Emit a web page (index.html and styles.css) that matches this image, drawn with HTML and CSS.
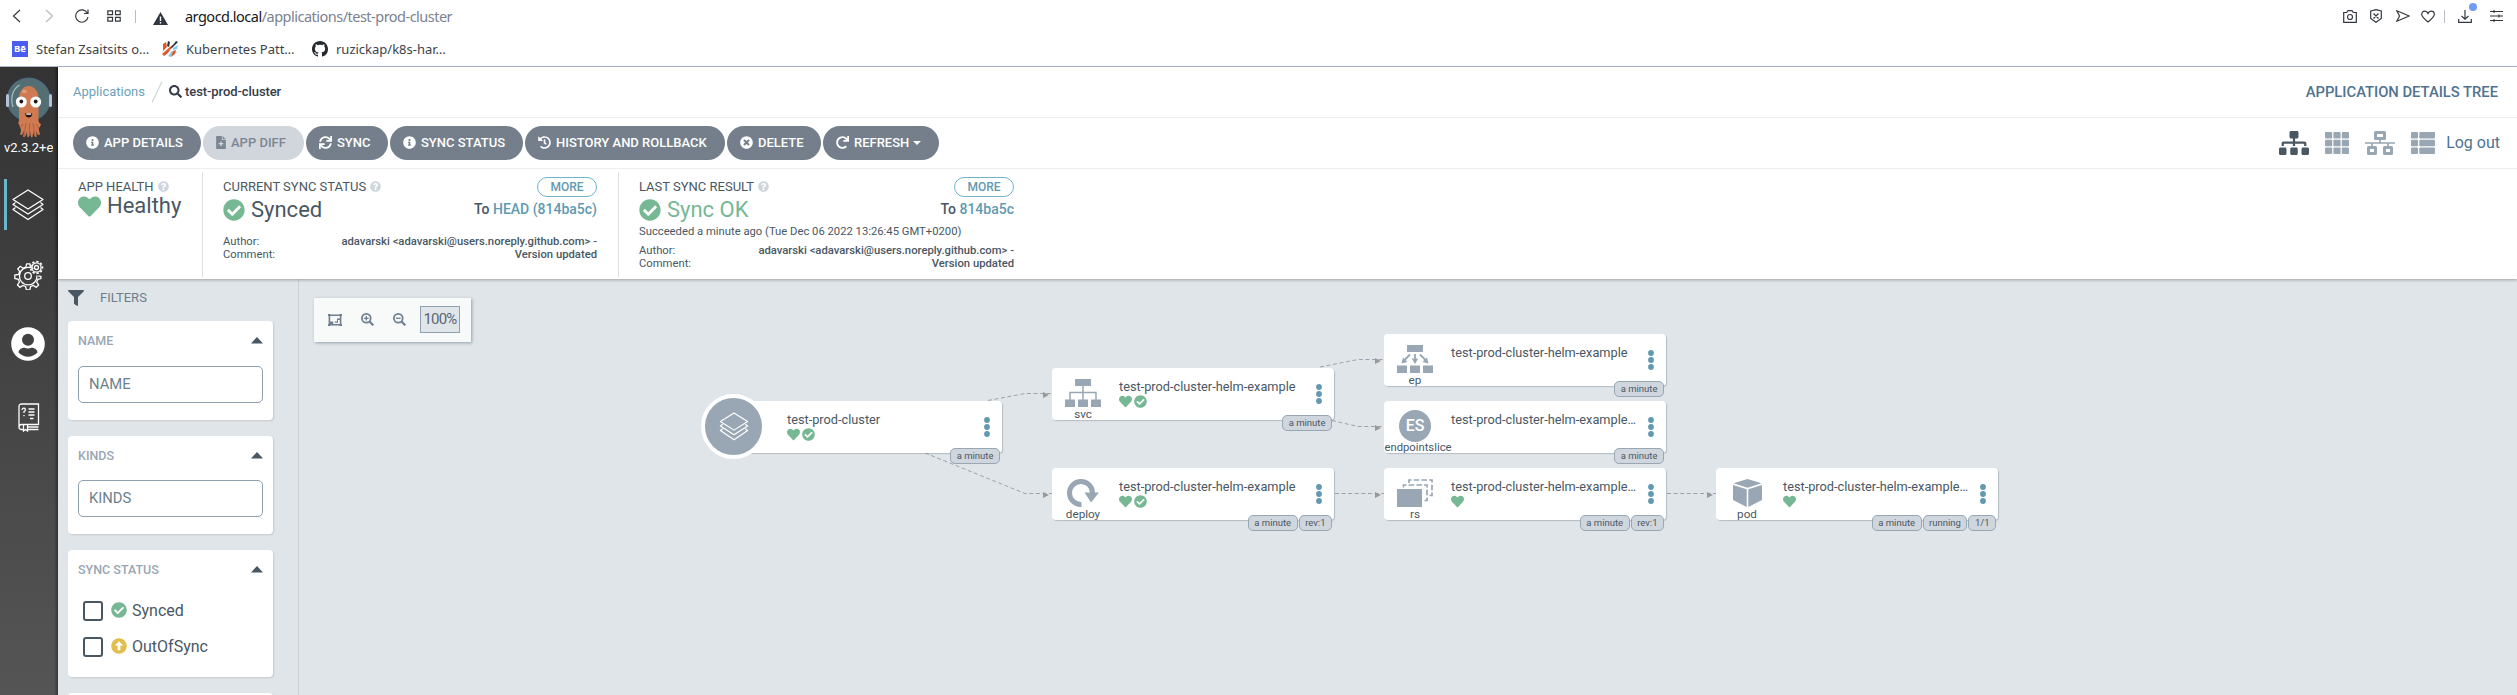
FILE: index.html
```html
<!DOCTYPE html>
<html lang="en">
<head>
<meta charset="utf-8">
<title>test-prod-cluster</title>
<link rel="stylesheet" href="styles.css">
</head>
<body>
<svg class="defs" width="0" height="0">
<defs>
<symbol id="info" viewBox="0 0 512 512"><path d="M256 8C119.043 8 8 119.083 8 256c0 136.997 111.043 248 248 248s248-111.003 248-248C504 119.083 392.957 8 256 8zm0 110c23.196 0 42 18.804 42 42s-18.804 42-42 42-42-18.804-42-42 18.804-42 42-42zm56 254c0 6.627-5.373 12-12 12h-88c-6.627 0-12-5.373-12-12v-24c0-6.627 5.373-12 12-12h12v-64h-12c-6.627 0-12-5.373-12-12v-24c0-6.627 5.373-12 12-12h64c6.627 0 12 5.373 12 12v100h12c6.627 0 12 5.373 12 12v24z"/></symbol>
<symbol id="heart" viewBox="0 0 512 512"><path d="M462.3 62.6C407.5 15.9 326 24.3 275.7 76.2L256 96.5l-19.7-20.3C186.1 24.3 104.5 15.9 49.7 62.6c-62.8 53.6-66.1 149.8-9.9 207.9l193.5 199.8c12.5 12.9 32.8 12.9 45.3 0l193.5-199.8c56.3-58.1 53-154.3-9.8-207.9z"/></symbol>
<symbol id="check" viewBox="0 0 512 512"><path d="M504 256c0 136.967-111.033 248-248 248S8 392.967 8 256 119.033 8 256 8s248 111.033 248 248zM227.314 387.314l184-184c6.248-6.248 6.248-16.379 0-22.627l-22.627-22.627c-6.248-6.249-16.379-6.249-22.628 0L216 308.118l-70.059-70.059c-6.248-6.248-16.379-6.248-22.628 0l-22.627 22.627c-6.248 6.248-6.248 16.379 0 22.627l104 104c6.249 6.249 16.379 6.249 22.628.001z"/></symbol>
<symbol id="sync" viewBox="0 0 512 512"><path d="M440.65 12.57l4 82.77A247.16 247.16 0 0 0 255.83 8C134.73 8 33.91 94.92 12.29 209.82A12 12 0 0 0 24.09 224h49.05a12 12 0 0 0 11.67-9.26 175.91 175.91 0 0 1 317-56.94l-101.46-4.86a12 12 0 0 0-12.57 12v47.41a12 12 0 0 0 12 12H500a12 12 0 0 0 12-12V12a12 12 0 0 0-12-12h-47.37a12 12 0 0 0-11.98 12.57zM255.83 432a175.61 175.61 0 0 1-146-77.8l101.8 4.87a12 12 0 0 0 12.57-12v-47.4a12 12 0 0 0-12-12H12a12 12 0 0 0-12 12V500a12 12 0 0 0 12 12h47.35a12 12 0 0 0 12-12.6l-4.15-82.57A247.17 247.17 0 0 0 255.83 504c121.11 0 221.93-86.92 243.55-201.82a12 12 0 0 0-11.8-14.18h-49.05a12 12 0 0 0-11.67 9.26A175.86 175.86 0 0 1 255.83 432z"/></symbol>
<symbol id="redo" viewBox="0 0 512 512"><path d="M500.33 0h-47.41a12 12 0 0 0-12 12.57l4 82.76A247.42 247.42 0 0 0 256 8C119.34 8 7.9 119.53 8 256.19 8.1 393.07 119.1 504 256 504a247.1 247.1 0 0 0 166.18-63.91 12 12 0 0 0 .48-17.43l-34-34a12 12 0 0 0-16.38-.55A176 176 0 1 1 402.1 157.8l-101.53-4.87a12 12 0 0 0-12.57 12v47.41a12 12 0 0 0 12 12h200.33a12 12 0 0 0 12-12V12a12 12 0 0 0-12-12z"/></symbol>
<symbol id="times" viewBox="0 0 512 512"><path d="M256 8C119 8 8 119 8 256s111 248 248 248 248-111 248-248S393 8 256 8zm121.6 313.1c4.7 4.7 4.7 12.3 0 17L338 377.6c-4.7 4.7-12.3 4.7-17 0L256 312l-65.1 65.6c-4.7 4.7-12.3 4.7-17 0L134.4 338c-4.7-4.7-4.7-12.3 0-17l65.6-65-65.6-65.1c-4.7-4.7-4.7-12.3 0-17l39.6-39.6c4.7-4.7 12.3-4.7 17 0l65 65.7 65.1-65.6c4.7-4.7 12.3-4.7 17 0l39.6 39.6c4.7 4.7 4.7 12.3 0 17L312 256l65.6 65.1z"/></symbol>
<symbol id="history" viewBox="0 0 512 512"><path d="M504 255.531c.253 136.64-111.18 248.372-247.82 248.468-59.015.042-113.223-20.53-155.822-54.911-11.077-8.94-11.905-25.541-1.839-35.607l11.267-11.267c8.609-8.609 22.353-9.551 31.891-1.984C173.062 425.135 212.781 440 256 440c101.705 0 184-82.311 184-184 0-101.705-82.311-184-184-184-48.814 0-93.149 18.969-126.068 49.932l50.754 50.754c10.08 10.08 2.941 27.314-11.313 27.314H24c-8.837 0-16-7.163-16-16V38.627c0-14.254 17.234-21.393 27.314-11.314l49.372 49.372C129.209 34.136 189.552 8 256 8c136.81 0 247.747 110.78 248 247.531zm-180.912 78.784l9.823-12.63c8.138-10.463 6.253-25.542-4.21-33.679L288 256.349V152c0-13.255-10.745-24-24-24h-16c-13.255 0-24 10.745-24 24v135.651l65.409 50.874c10.463 8.137 25.541 6.253 33.679-4.21z"/></symbol>
<symbol id="filediff" viewBox="0 0 384 512"><path fill-rule="evenodd" d="M24 0h200v136c0 13 11 24 24 24h136v328c0 13-11 24-24 24H24c-13 0-24-11-24-24V24C0 11 11 0 24 0zM256 0l128 128H256zM164 216v64h-64v48h64v64h56v-64h64v-48h-64v-64z"/></symbol>
<symbol id="search" viewBox="0 0 512 512"><path d="M505 442.7L405.3 343c-4.5-4.5-10.6-7-17-7H372c27.6-35.3 44-79.7 44-128C416 93.1 322.9 0 208 0S0 93.1 0 208s93.1 208 208 208c48.3 0 92.7-16.4 128-44v16.3c0 6.4 2.5 12.5 7 17l99.7 99.7c9.4 9.4 24.6 9.4 33.9 0l28.3-28.3c9.4-9.4 9.4-24.6.1-34zM208 336c-70.7 0-128-57.2-128-128 0-70.7 57.2-128 128-128 70.7 0 128 57.2 128 128 0 70.7-57.2 128-128 128z"/></symbol>
<symbol id="filter" viewBox="0 0 512 512"><path d="M487.976 0H24.028C2.71 0-8.047 25.866 7.058 40.971L192 225.941V432c0 7.831 3.821 15.17 10.237 19.662l80 55.98C298.02 518.69 320 507.493 320 487.98V225.941l184.947-184.97C520.021 25.896 509.338 0 487.976 0z"/></symbol>
<symbol id="question" viewBox="0 0 512 512"><path d="M504 256c0 136.997-111.043 248-248 248S8 392.997 8 256C8 119.083 119.043 8 256 8s248 111.083 248 248zM262.655 90c-54.497 0-89.255 22.957-116.549 63.758-3.536 5.286-2.353 12.415 2.715 16.258l34.699 26.31c5.205 3.947 12.621 3.008 16.665-2.122 17.864-22.658 30.113-35.797 57.303-35.797 20.429 0 45.698 13.148 45.698 32.958 0 14.976-12.363 22.667-32.534 33.976C247.128 238.528 216 254.941 216 296v4c0 6.627 5.373 12 12 12h56c6.627 0 12-5.373 12-12v-1.333c0-28.462 83.186-29.647 83.186-106.667 0-58.002-60.165-102-116.531-102zM256 338c-25.365 0-46 20.635-46 46 0 25.364 20.635 46 46 46s46-20.636 46-46c0-25.365-20.635-46-46-46z"/></symbol>
<symbol id="up" viewBox="0 0 16 16"><circle cx="8" cy="8" r="7.8"/><path fill="#fff" d="M8 3.200l4.200 4.400H9.400v4.600H6.600V7.600H3.800z"/></symbol>
<symbol id="layers" viewBox="0 0 32 32"><g fill="none" stroke="currentColor" stroke-width="1.300" stroke-linejoin="round"><path d="M16 1l15 9.500-15 9.500L1 10.500z"/><path d="M3.500 13.500L1 15.500 16 25l15-9.500-2.500-2"/><path d="M3.500 18.500L1 20.500 16 30.500l15-10-2.500-2"/></g></symbol>
<symbol id="dots" viewBox="0 0 6 20"><circle cx="3" cy="3" r="2.900"/><circle cx="3" cy="10" r="2.900"/><circle cx="3" cy="17" r="2.900"/></symbol>
<symbol id="caret" viewBox="0 0 12 7"><path d="M0 6.600L6 0l6 6.600z"/></symbol>
</defs>
</svg>

<header class="browser">
  <div class="navbar">
    <div class="nav-left">
      <svg class="bi" width="9" height="14" viewBox="0 0 9 14"><path d="M8 1L1.500 7 8 13"/></svg>
      <svg class="bi dim fwd" width="9" height="14" viewBox="0 0 9 14"><path d="M1 1l6.500 6L1 13"/></svg>
      <svg class="bi reload" width="14" height="14" viewBox="0 0 14 14"><path d="M12.400 4.200A6.200 6.200 0 1 0 13 8M13 .5v4H9"/></svg>
      <svg class="bi tiles" width="14" height="12" viewBox="0 0 14 12"><path d="M.8.8h4.700v3.900H.8zM8.500.8h4.700v3.900H8.500zM.8 7.300h4.700v3.900H.8zM8.500 7.300h4.700v3.900H8.500z"/></svg>
      <span class="sep"></span>
      <svg class="warn" width="15" height="13" viewBox="0 0 15 13"><path fill="#2f3640" d="M7.500 0L15 13H0z"/><path fill="#fff" d="M6.800 4.500h1.400V9H6.800zM6.800 10h1.400v1.400H6.800z"/></svg>
      <span class="url"><b>argocd.local</b>/applications/test-prod-cluster</span>
    </div>
    <div class="nav-right">
      <svg class="bi" width="14" height="13" viewBox="0 0 14 13"><path d="M.7 2.500h3L5 .7h4l1.300 1.800h3v9.800H.7z"/><circle cx="7" cy="7" r="2.500"/></svg>
      <svg class="bi shield" width="12" height="14" viewBox="0 0 12 14"><path d="M.7 2L6 .7 11.300 2v7.500L6 13.300.7 9.500zM3.500 4.500l5 5M8.500 4.500l-5 5"/></svg>
      <svg class="bi send" width="14" height="12" viewBox="0 0 14 12"><path d="M.8.8L13.200 6 .8 11.200 3.500 6z"/></svg>
      <svg class="bi fav" width="14" height="13" viewBox="0 0 14 12"><path d="M7 11.400C2.500 8 .7 6 .7 3.800 .7 2 2 .7 3.800.7 5.200.7 6.400 1.600 7 3 7.600 1.600 8.800.7 10.200.7 12 .7 13.300 2 13.300 3.800c0 2.200-1.800 4.200-6.300 7.600z"/></svg>
      <span class="sep"></span>
      <span class="dl"><svg class="bi" width="14" height="13" viewBox="0 0 14 13"><path d="M7 0v9M3.500 6L7 9.300 10.500 6M.7 9v3.300h12.600V9"/></svg><i class="dot"></i></span>
      <svg class="bi" width="13" height="12" viewBox="0 0 13 12"><path d="M0 1.500h13M0 6h13M0 10.500h13M4 0v3M9 4.500v3M4 9v3"/></svg>
    </div>
  </div>
  <div class="bookmarks">
    <span class="be">Bē</span><span class="bm bm1">Stefan Zsaitsits o…</span>
    <svg width="16" height="16" viewBox="0 0 16 16"><path fill="#e0592a" d="M1 3l3-2 1 5-4 4zM0 13l9-8 3-2-6 9-4 3z"/><path fill="#23304a" d="M6 0l2 1-1 5-2-1zM14 0l2 1-6 6-2 1z"/><path fill="#7fcdf5" d="M11 7l5-3-1 4-4 1zM6 15l4-5 5 1-4 2-2 3z"/><path fill="#e0592a" d="M11 10l3-1-1 4-4 3z"/></svg>
    <span class="bm bm2">Kubernetes Patt…</span>
    <svg width="16" height="16" viewBox="0 0 16 16"><path fill="#24292f" d="M8 0C3.580 0 0 3.580 0 8c0 3.540 2.290 6.530 5.470 7.590.4.070.55-.17.55-.38 0-.19-.01-.82-.01-1.490-2.010.37-2.530-.49-2.690-.94-.09-.23-.48-.94-.82-1.130-.28-.15-.68-.52-.01-.53.63-.01 1.080.58 1.230.82.72 1.210 1.870.87 2.330.66.070-.52.28-.87.51-1.070-1.780-.2-3.640-.89-3.640-3.950 0-.87.31-1.590.82-2.150-.08-.2-.36-1.020.08-2.120 0 0 .67-.21 2.200.82.64-.18 1.320-.27 2-.27s1.360.09 2 .27c1.530-1.040 2.200-.82 2.200-.82.44 1.100.16 1.920.08 2.120.51.56.82 1.270.82 2.150 0 3.070-1.870 3.750-3.650 3.950.29.25.54.73.54 1.480 0 1.070-.01 1.930-.01 2.200 0 .21.15.46.55.38A8.010 8.010 0 0016 8c0-4.420-3.580-8-8-8z"/></svg>
    <span class="bm bm3">ruzickap/k8s-har…</span>
  </div>
</header>

<div class="app">
  <nav class="sidebar">
    <svg class="logo" width="48" height="62" viewBox="0 0 48 62">
      <circle cx="22.700" cy="22.500" r="21.500" fill="#546f74" stroke="#4c6a8c" stroke-width="1"/>
      <path d="M7 30C4 20 7 12 13.500 8" fill="none" stroke="#9fb9bb" stroke-width="1.300"/>
      <rect x="0" y="17" width="3" height="13" rx="1.500" fill="#b6c0d8"/><rect x="43" y="17" width="3" height="13" rx="1.500" fill="#b6c0d8"/>
      <path fill="#cf7a50" d="M13 44V21c0-6 4-12 9.700-12s9.800 6 9.800 12v23c1 4 4 2 2 4 .5 2-2 1.500-1.500 5 0 2.500 1.500 4 .5 5-2 .5-3-2-3.500-5 0 3 1 5 .5 7-2 .5-3-3-3.500-6 0 3 0 6-1 6.500-1.500-.5-1.500-3.500-2-6.500-.5 3-.5 6-2 6.500-1-.5-1-3.500-1-6.500-.5 3-1.500 6.500-3.500 6-1 0 .5-3 .5-7-.5 3-2 5.500-3.500 5-1-.5.500-2 .5-5 0-2-2-3-1.500-5-1.500-1-2-4 1.500-5z"/>
      <path d="M17 47l-3 4M20 46l-2 13M23.500 46v13M27 46l2 13M30 47l3 5" stroke="#a95b3a" stroke-width=".8" fill="none"/>
      <ellipse cx="18.500" cy="14.500" rx="2.600" ry="1.800" fill="#e39b78"/>
      <circle cx="15.300" cy="25" r="5.500" fill="#fff"/><circle cx="29.700" cy="25" r="5.500" fill="#fff"/>
      <circle cx="15.300" cy="24.500" r="1.900" fill="#1b1b1b"/><circle cx="29.700" cy="24.500" r="1.900" fill="#1b1b1b"/>
      <path d="M19.200 36c1.500 1 5.500 1 7 0 0 3-1.500 4.500-3.500 4.500s-3.500-1.500-3.500-4.500z" fill="#241010"/><path d="M20.200 36.500h5v1.200h-5z" fill="#fff"/>
    </svg>
    <span class="version">v2.3.2+e</span>
    <div class="side-item active"><svg width="32" height="32"><use href="#layers"/></svg></div>
    <svg class="gear" width="30" height="30" viewBox="0 0 30 30" fill="none" stroke="#fff" stroke-width="1.300">
      <path d="M19.500 8.500l-3-1.300-.6-3.400h-3.200l-.8 3.200-2.800 1.200-2.800-1.900-2.500 2.500 1.900 2.900-1.200 2.800-3.700.6v3.400l3.500.8 1.100 2.700-1.900 2.900 2.400 2.400 3-1.900 2.700 1.100.8 3.300h3.400l.8-3.300 2.800-1.100 2.800 1.900 2.400-2.400-1.900-2.800 1.200-2.800 3-.7V16.500l-2.600-.6"/>
      <path d="M16 7.500A8.800 8.800 0 1 0 23 15.500"/><circle cx="14" cy="16" r="3.300"/>
      <circle cx="22.500" cy="7.500" r="2"/><path stroke-width="1.600" stroke-dasharray="2.200 1.900" d="M22.500 1.500a6 6 0 1 1-.01 0z"/><circle cx="22.500" cy="7.500" r="4.600"/>
    </svg>
    <svg class="user" width="34" height="34" viewBox="0 0 34 34"><circle cx="17" cy="17" r="16.800" fill="#fff"/><circle cx="17" cy="12.700" r="6" fill="#414141"/><path fill="#414141" d="M7.500 25.500c0-3 3.500-4.800 6-4.800 2 .9 5 .9 7 0 2.500 0 6 1.800 6 4.800-2.500 2.700-6 4.200-9.500 4.200s-7-1.500-9.500-4.200z"/></svg>
    <svg class="book" width="22" height="29" viewBox="0 0 22 29" fill="none" stroke="#fff" stroke-width="1.300"><path d="M20.500 22V1H3.500Q1 1 1 3.500V24q0 2.500 2.500 2.500H5M9 26.500h11.500M1 24q0-2.500 2.500-2.500h17M9 24h11.500"/><path d="M5.500 21.500V28l2-1.500 2 1.500v-6.500M10.500 6h6M10.500 9h6M10.500 12h6M12 15.500h3.500M4 7q.3-2 2-1.800 1.700.3 1.300 2-.3 1-1.300 1.300v1.500M6 12v1.300"/></svg>
  </nav>

  <main class="main">
    <div class="top">
      <div class="crumbs">
        <a class="applink">Applications</a>
        <svg class="slash" width="12" height="22" viewBox="0 0 12 22"><path d="M1 21.500L11 .5" stroke="#cdd3d9" stroke-width="1.100"/></svg>
        <svg class="crumb-search" width="13" height="13"><use href="#search"/></svg>
        <span class="crumb-name">test-prod-cluster</span>
        <span class="page-title">APPLICATION DETAILS TREE</span>
      </div>
      <div class="toolbar">
        <div class="buttons">
          <button class="btn w1"><svg width="13" height="13"><use href="#info"/></svg>APP DETAILS</button>
          <button class="btn w2 disabled"><svg class="narrow" width="10" height="13"><use href="#filediff"/></svg>APP DIFF</button>
          <button class="btn w3"><svg width="13" height="13"><use href="#sync"/></svg>SYNC</button>
          <button class="btn w4"><svg width="13" height="13"><use href="#info"/></svg>SYNC STATUS</button>
          <button class="btn w5"><svg width="13" height="13"><use href="#history"/></svg>HISTORY AND ROLLBACK</button>
          <button class="btn w6"><svg width="13" height="13"><use href="#times"/></svg>DELETE</button>
          <button class="btn w7"><svg width="13" height="13"><use href="#redo"/></svg>REFRESH<i class="down"></i></button>
        </div>
        <div class="views">
          <svg width="30" height="24" viewBox="0 0 640 512" fill="#495763"><path d="M128 352H32c-17.670 0-32 14.330-32 32v96c0 17.670 14.330 32 32 32h96c17.670 0 32-14.330 32-32v-96c0-17.670-14.330-32-32-32zm-24-80h192v48h48v-48h192v48h48v-57.590c0-21.170-17.230-38.410-38.410-38.410H344v-64h40c17.670 0 32-14.330 32-32V32c0-17.670-14.330-32-32-32H256c-17.670 0-32 14.330-32 32v96c0 17.670 14.330 32 32 32h40v64H94.410C73.230 224 56 241.230 56 262.410V320h48v-48zm264 80h-96c-17.670 0-32 14.330-32 32v96c0 17.670 14.330 32 32 32h96c17.670 0 32-14.330 32-32v-96c0-17.670-14.330-32-32-32zm240 0h-96c-17.670 0-32 14.330-32 32v96c0 17.670 14.330 32 32 32h96c17.670 0 32-14.330 32-32v-96c0-17.670-14.330-32-32-32z"/></svg>
          <svg width="24" height="22" viewBox="0 0 24 22" fill="#99a6b3"><rect width="7.200" height="6.500" rx="1"/><rect x="8.400" width="7.200" height="6.500" rx="1"/><rect x="16.800" width="7.200" height="6.500" rx="1"/><rect y="7.700" width="7.200" height="6.500" rx="1"/><rect x="8.400" y="7.700" width="7.200" height="6.500" rx="1"/><rect x="16.800" y="7.700" width="7.200" height="6.500" rx="1"/><rect y="15.400" width="7.200" height="6.500" rx="1"/><rect x="8.400" y="15.400" width="7.200" height="6.500" rx="1"/><rect x="16.800" y="15.400" width="7.200" height="6.500" rx="1"/></svg>
          <svg width="30" height="24" viewBox="0 0 30 24" fill="none" stroke="#99a6b3"><path stroke-width="3" stroke-linejoin="round" d="M10.500 1.500h9v6h-9zM3.500 16.500h7v6h-7zM19.500 16.500h7v6h-7z"/><path stroke-width="1.700" d="M15 9v3M0 12h30M7 12v4M23 12v4"/></svg>
          <svg width="24" height="22" viewBox="0 0 24 22" fill="#99a6b3"><rect width="7" height="6.500" rx="1"/><rect x="8.300" width="15.700" height="6.500" rx="1"/><rect y="7.700" width="7" height="6.500" rx="1"/><rect x="8.300" y="7.700" width="15.700" height="6.500" rx="1"/><rect y="15.400" width="7" height="6.500" rx="1"/><rect x="8.300" y="15.400" width="15.700" height="6.500" rx="1"/></svg>
          <a class="logout">Log out</a>
        </div>
      </div>
      <div class="status">
        <section class="st st-health">
          <div class="st-label">APP HEALTH <svg width="11" height="11"><use href="#question"/></svg></div>
          <div class="st-value"><svg class="green" width="23" height="23"><use href="#heart"/></svg>Healthy</div>
        </section>
        <section class="st st-sync">
          <div class="st-head"><div class="st-label">CURRENT SYNC STATUS <svg width="11" height="11"><use href="#question"/></svg></div><button class="more">MORE</button></div>
          <div class="st-mid"><div class="st-value"><svg class="green" width="22" height="22"><use href="#check"/></svg>Synced</div><div class="to">To <a>HEAD (814ba5c)</a></div></div>
          <dl class="meta meta-gap"><dt>Author:</dt><dd>adavarski &lt;adavarski@users.noreply.github.com&gt; -</dd><dt>Comment:</dt><dd>Version updated</dd></dl>
        </section>
        <section class="st st-last">
          <div class="st-head"><div class="st-label">LAST SYNC RESULT <svg width="11" height="11"><use href="#question"/></svg></div><button class="more">MORE</button></div>
          <div class="st-mid"><div class="st-value ok"><svg class="green" width="22" height="22"><use href="#check"/></svg>Sync OK</div><div class="to">To <a>814ba5c</a></div></div>
          <div class="succeeded">Succeeded a minute ago (Tue Dec 06 2022 13:26:45 GMT+0200)</div>
          <dl class="meta"><dt>Author:</dt><dd>adavarski &lt;adavarski@users.noreply.github.com&gt; -</dd><dt>Comment:</dt><dd>Version updated</dd></dl>
        </section>
      </div>
    </div>

    <div class="content">
      <aside class="filters">
        <div class="f-head"><svg width="16" height="16"><use href="#filter"/></svg>FILTERS</div>
        <div class="card c1"><div class="c-title">NAME<svg width="12" height="7"><use href="#caret"/></svg></div><div class="field">NAME</div></div>
        <div class="card c2"><div class="c-title">KINDS<svg width="12" height="7"><use href="#caret"/></svg></div><div class="field">KINDS</div></div>
        <div class="card c3"><div class="c-title">SYNC STATUS<svg width="12" height="7"><use href="#caret"/></svg></div>
          <div class="opt"><i class="box"></i><svg class="green" width="16" height="16"><use href="#check"/></svg>Synced</div>
          <div class="opt"><i class="box"></i><svg class="yellow" width="16" height="16"><use href="#up"/></svg>OutOfSync</div>
        </div>
        <div class="card c4"></div>
      </aside>
      <div class="canvas">
        <div class="zoombar">
          <svg width="14" height="12" viewBox="0 0 14 12"><path fill="#6f7f8f" fill-rule="evenodd" d="M0 0h2.500v.5h9V0H14v2h-.6v8h.6v2h-2.500v-.6h-9v.6H0v-2h.6V2H0zM2.200 2v5.500h3v2.600h1.600V7.500H9V4.500h2.800V2zM6.800 10.100h5V6H10v2.800H6.800z"/></svg>
          <svg width="13" height="13" viewBox="0 0 13 13" fill="none" stroke="#6f7f8f"><circle cx="5.300" cy="5.300" r="4.400" stroke-width="1.800"/><path d="M8.500 8.500l3.800 3.800" stroke-width="2.200"/><path d="M3 5.300h4.600M5.300 3v4.600" stroke-width="1.300"/></svg>
          <svg width="13" height="13" viewBox="0 0 13 13" fill="none" stroke="#6f7f8f"><circle cx="5.300" cy="5.300" r="4.400" stroke-width="1.800"/><path d="M8.500 8.500l3.800 3.800" stroke-width="2.200"/><path d="M3 5.300h4.600" stroke-width="1.300"/></svg>
          <span class="pct">100%</span>
        </div>
        <svg class="edges" width="2218" height="416" viewBox="299 279 2218 416">
          <g fill="none" stroke="#9aa3ad" stroke-width="1" stroke-dasharray="4 2.600">
            <path d="M988 400.500L1025 393.500H1052M925 453L1025 493.500H1052M1320 367L1358 359.500H1384M1332 420.500L1358 426.500H1384M1335 493.500H1384M1667 493.500H1716"/>
          </g>
          <path fill="#999" d="M1043 392l6 3-6 3zM1043 492l6 3-6 3zM1375 358l6 3-6 3zM1375 425l6 3-6 3zM1375 492l6 3-6 3zM1707 492l6 3-6 3z"/>
        </svg>
        <div class="node root n-root">
          <div class="ring"><svg width="30" height="29"><use href="#layers"/></svg></div>
          <div class="n-body"><div class="n-name">test-prod-cluster</div><div class="n-state"><svg><use href="#heart"/></svg><svg><use href="#check"/></svg></div></div>
          <svg class="n-menu" width="6" height="20"><use href="#dots"/></svg>
          <div class="tags"><span>a minute</span></div>
        </div>
        <div class="node n-svc">
          <div class="kind"><svg width="36" height="28" viewBox="0 0 36 28"><path fill="#99a6b3" d="M10 0h16v7H10zM0 20.500h10V28H0zM13 20.500h10V28H13zM26 20.500h10V28H26z"/><path fill="none" stroke="#99a6b3" stroke-width="1.500" d="M18 7v14M5 21v-7.500h26V21"/></svg><span>svc</span></div>
          <div class="n-body"><div class="n-name">test-prod-cluster-helm-example</div><div class="n-state"><svg><use href="#heart"/></svg><svg><use href="#check"/></svg></div></div>
          <svg class="n-menu" width="6" height="20"><use href="#dots"/></svg>
          <div class="tags"><span>a minute</span></div>
        </div>
        <div class="node n-deploy">
          <div class="kind"><svg width="36" height="28" viewBox="0 0 36 28"><path fill="none" stroke="#99a6b3" stroke-width="5" d="M16.500 25.500A11.500 11.500 0 1 1 27.500 14"/><path fill="#99a6b3" d="M19.500 13.500h14.500L26 23.500z"/></svg><span>deploy</span></div>
          <div class="n-body"><div class="n-name">test-prod-cluster-helm-example</div><div class="n-state"><svg><use href="#heart"/></svg><svg><use href="#check"/></svg></div></div>
          <svg class="n-menu" width="6" height="20"><use href="#dots"/></svg>
          <div class="tags"><span>a minute</span><span>rev:1</span></div>
        </div>
        <div class="node n-ep">
          <div class="kind"><svg width="36" height="28" viewBox="0 0 36 28"><path fill="#99a6b3" d="M10 0h16v7H10zM0 20.500h10V28H0zM13 20.500h10V28H13zM26 20.500h10V28H26zM4.500 18.500l1.500-6 4.500 4.500zM31.500 18.500l-1.500-6-4.500 4.500zM18 19l-3.200-5.500h6.400z"/><path fill="none" stroke="#99a6b3" stroke-width="1.800" d="M18 9v6M13 9.500l-6 6M23 9.500l6 6"/></svg><span>ep</span></div>
          <div class="n-body"><div class="n-name">test-prod-cluster-helm-example</div></div>
          <svg class="n-menu" width="6" height="20"><use href="#dots"/></svg>
          <div class="tags"><span>a minute</span></div>
        </div>
        <div class="node n-es">
          <div class="kind"><div class="es">ES</div><span class="wide">endpointslice</span></div>
          <div class="n-body"><div class="n-name">test-prod-cluster-helm-example…</div></div>
          <svg class="n-menu" width="6" height="20"><use href="#dots"/></svg>
          <div class="tags"><span>a minute</span></div>
        </div>
        <div class="node n-rs">
          <div class="kind"><svg width="36" height="28" viewBox="0 0 36 28"><path fill="#99a6b3" d="M0 10h25v18H0z"/><path fill="none" stroke="#99a6b3" stroke-width="1.700" stroke-dasharray="5.500 2.200" d="M6.500 8.500V6H30v15.500h-3.500M12 4V1h23v15.500h-3"/></svg><span>rs</span></div>
          <div class="n-body"><div class="n-name">test-prod-cluster-helm-example…</div><div class="n-state"><svg><use href="#heart"/></svg></div></div>
          <svg class="n-menu" width="6" height="20"><use href="#dots"/></svg>
          <div class="tags"><span>a minute</span><span>rev:1</span></div>
        </div>
        <div class="node n-pod">
          <div class="kind"><svg width="36" height="28" viewBox="0 0 36 28"><path fill="#99a6b3" d="M18.500 0l14 4.300-14 4.400-14-4.400zM4 5.900l13.700 4.400V28L4 21zM33 5.900L19.300 10.300V28L33 21z"/></svg><span>pod</span></div>
          <div class="n-body"><div class="n-name">test-prod-cluster-helm-example…</div><div class="n-state"><svg><use href="#heart"/></svg></div></div>
          <svg class="n-menu" width="6" height="20"><use href="#dots"/></svg>
          <div class="tags"><span>a minute</span><span>running</span><span>1/1</span></div>
        </div>
      </div>
    </div>
  </main>
</div>
</body>
</html>
```
FILE: styles.css
```css
* { box-sizing: border-box; }
html, body { margin: 0; height: 695px; overflow: hidden; }
body { font-family: Roboto, "Liberation Sans", sans-serif; color: #495763; background: #fff; display: flex; flex-direction: column; }
svg { display: block; flex: none; }
button { font-family: inherit; border: 0; margin: 0; }
.defs { position: absolute; }

/* browser chrome */
.browser { height: 67px; flex: none; border-bottom: 1px solid #aeb8c6; font-family: "Noto Sans", sans-serif; color: #3d4249; }
.navbar { height: 32px; display: flex; justify-content: space-between; }
.nav-left { display: flex; align-items: center; padding-left: 12px; }
.bi { fill: none; stroke: #33383f; stroke-width: 1.200; }
.bi.dim { stroke: #b6babf; }
.fwd { margin-left: 24px; }
.reload { margin-left: 21px; }
.tiles { margin-left: 18px; }
.sep { width: 1px; height: 13px; background: #b9bdc4; }
.nav-left .sep { margin-left: 14px; }
.warn { margin: 4px 0 0 17px; }
.url { margin-left: 17px; font-size: 14.500px; color: #7b8291; white-space: nowrap; letter-spacing: -.51px; }
.url b { font-weight: 400; color: #15181c; }
.nav-right { display: flex; align-items: center; padding-right: 14px; }
.shield { margin-left: 13px; }
.send { margin-left: 14px; }
.fav { margin-left: 11px; }
.nav-right .sep { margin: 0 13px 0 9px; }
.dl { position: relative; margin-right: 18px; }
.dot { position: absolute; left: 11px; top: -7px; width: 8px; height: 8px; border-radius: 50%; background: #6f9df5; }
.bookmarks { height: 34px; display: flex; align-items: center; padding-left: 12px; font-size: 13px; }
.be { width: 16px; height: 16px; background: #4b5cf0; color: #fff; font: 700 9.500px/16px "Noto Sans", sans-serif; text-align: center; }
.bm { margin-left: 8px; white-space: nowrap; }
.bm1 { width: 126px; }
.bm2 { width: 126px; }

.app { flex: 1; display: flex; min-height: 0; }

/* dark side navigation */
.sidebar { width: 58px; flex: none; background: linear-gradient(90deg, transparent 54px, rgba(0,0,0,.35)), linear-gradient(#333, #555); display: flex; flex-direction: column; align-items: flex-start; }
.logo { margin: 10px 0 0 6px; }
.version { margin: 1px 0 0 4px; width: 49px; height: 16px; overflow: hidden; color: #fff; font-size: 13px; line-height: 16px; white-space: nowrap; }
.side-item { margin: 23px 0 0 4px; width: 48px; height: 51px; display: flex; align-items: center; padding-left: 5px; color: #fff; border-left: 3px solid #6cb6cb; }
.gear { margin: 30px 0 0 14px; }
.user { margin: 37px 0 0 11px; }
.book { margin: 42px 0 0 18px; }

.main { flex: 1; min-width: 0; display: flex; flex-direction: column; }
.top { position: relative; z-index: 2; background: #fff; box-shadow: 0 1px 3px rgba(0,0,0,.3); flex: none; height: 212px; }
.crumbs { height: 51px; display: flex; align-items: center; border-bottom: 1px solid #eceef0; padding: 0 19px 1px 15px; font-size: 13px; }
.applink { width: 72px; color: #6b9fb8; white-space: nowrap; }
.slash { margin-left: 6px; }
.crumb-search { margin-left: 6px; fill: #363c4a; }
.crumb-name { margin-left: 3px; font-weight: 500; color: #363c4a; letter-spacing: -.08px; }
.page-title { margin-left: auto; font-size: 14.750px; font-weight: 500; color: #4f7390; }
.toolbar { height: 51px; display: flex; align-items: center; justify-content: space-between; border-bottom: 1px solid #eceef0; padding: 0 17px 0 15px; }
.buttons { display: flex; gap: 2px; }
.btn { height: 34px; border-radius: 17px; background: #747f8b; color: #fff; font-size: 13px; font-weight: 500; display: flex; align-items: center; padding: 0 0 1px 13px; white-space: nowrap; }
.btn svg { margin-right: 5px; fill: currentColor; }
.btn.disabled { background: #d1d5dc; color: #7c8693; }
.w1 { width: 128px; } .w2 { width: 101px; } .w3 { width: 82px; } .w4 { width: 133px; } .w5 { width: 200px; } .w6 { width: 94px; } .w7 { width: 116px; }
.down { margin-left: 4px; border: 4px solid transparent; border-top: 4px solid #fff; border-bottom: 0; }
.views { display: flex; align-items: center; gap: 16px; }
.logout { margin: 0 0 1px -5px; font-size: 16px; color: #4f7390; }

/* status panel */
.status { display: flex; height: 110px; padding: 3px 0 2px 20px; }
.st { height: 105px; }
.st-health { width: 125px; border-right: 1px solid #dee2e6; padding-top: 7px; }
.st-sync { width: 416px; border-right: 1px solid #dee2e6; padding: 5px 21px 0 20px; }
.st-last { width: 395px; padding: 5px 0 0 20px; }
.st-label { display: flex; align-items: center; gap: 4px; font-size: 13px; line-height: 15px; white-space: nowrap; }
.st-label svg { fill: #cfd5dc; }
.st-value { display: flex; align-items: center; gap: 6px; font-size: 22px; line-height: 26px; }
.st-health .st-value { height: 24px; }
.green { fill: #76b894; }
.yellow { fill: #e0bf4d; }
.ok { color: #76b894; }
.st-head { display: flex; justify-content: space-between; height: 20px; }
.st-head .st-label { height: 17px; padding-top: 1px; }
.more { width: 60px; height: 20px; border: 1px solid #6fb3c8; border-radius: 10px; background: #fff; color: #5f9ab0; font-size: 12px; font-weight: 500; line-height: 18px; padding: 0; }
.st-mid { display: flex; justify-content: space-between; height: 25px; }
.to { font-size: 14px; font-weight: 500; line-height: 24px; }
.to a { color: #5f9ab0; }
.succeeded { font-size: 11.250px; line-height: 14px; margin-top: 3px; white-space: nowrap; }
.meta { margin: 5px 0 0; display: grid; grid-template-columns: 80px 1fr; font-size: 11.250px; line-height: 13px; }
.meta-gap { margin-top: 13px; }
.meta dd { margin: 0; font-weight: 500; white-space: nowrap; justify-self: end; }

/* filter column */
.content { flex: 1; min-height: 0; display: flex; background: #e0e5e9; }
.filters { width: 241px; flex: none; border-right: 1px solid #cdd2d7; padding: 10px 0 0 10px; overflow: hidden; }
.f-head { display: flex; align-items: center; gap: 16px; height: 17px; font-size: 13px; color: #6d7f8b; }
.f-head svg { fill: #495763; }
.card { width: 205px; background: #fff; border-radius: 4px; box-shadow: 1px 1px 2px rgba(0,0,0,.12); padding: 10px 10px 0; margin-top: 16px; }
.c1 { height: 99px; margin-top: 15px; } .c2 { height: 98px; } .c3 { height: 127px; } .c4 { height: 60px; }
.c-title { display: flex; align-items: center; justify-content: space-between; height: 18px; font-size: 12.500px; font-weight: 500; color: #99a6b3; }
.c-title svg { fill: #495763; }
.field { margin-top: 17px; height: 37px; border: 1px solid #8fa0b0; border-radius: 5px; padding-left: 10px; font-size: 14.800px; line-height: 34px; color: #6d7f8b; }
.c2 .field { margin-top: 16px; }
.opt { display: flex; align-items: center; height: 20px; margin: 16px 0 0 5px; font-size: 16px; line-height: 18px; padding-bottom: 1px; }
.c-title + .opt { margin-top: 23px; }
.box { width: 20px; height: 20px; border: 2px solid #495763; border-radius: 3px; margin: 1px 8px 0 0; }
.opt svg { margin: -1px 5px 0 0; }

/* resource tree */
.canvas { flex: 1; position: relative; overflow: hidden; }
.edges { position: absolute; left: 0; top: 0; }
.zoombar { position: absolute; left: 15px; top: 19px; width: 157px; height: 44px; background: #f8fafa; box-shadow: 1px 1px 3px rgba(60,80,100,.45); display: flex; align-items: center; padding: 0 0 1px 14px; gap: 19px; }
.pct { width: 40px; height: 27px; margin-left: -5px; border: 1px solid #8fa0b0; background: #e0e5e9; font-size: 15px; letter-spacing: -.8px; line-height: 24px; text-align: center; color: #5b6670; }
.node { position: absolute; width: 282px; height: 52px; background: #fff; border-radius: 4px; box-shadow: 1px 1px 1px rgba(100,115,130,.35); }
.n-root { left: 421px; top: 122px; }
.n-svc { left: 753px; top: 89px; }
.n-deploy { left: 753px; top: 189px; }
.n-ep { left: 1085px; top: 55px; }
.n-es { left: 1085px; top: 122px; }
.n-rs { left: 1085px; top: 189px; }
.n-pod { left: 1417px; top: 189px; }
.ring { position: absolute; left: -19px; top: -7px; width: 65px; height: 65px; border: 4px solid #fff; border-radius: 50%; background: #99a6b3; color: #fff; display: flex; align-items: center; justify-content: center; }
.kind { position: absolute; left: 1px; top: 11px; width: 60px; display: flex; flex-direction: column; align-items: center; font-size: 11.700px; }
.kind span { margin-top: 1px; line-height: 13px; }
.kind .wide { font-size: 11.250px; margin-left: 6px; }
.es { width: 32px; height: 32px; margin: -2px 0 -2px; border-radius: 50%; background: #99a6b3; color: #fff; font-size: 16px; font-weight: 500; line-height: 32px; text-align: center; }
.n-body { padding: 11px 0 0 67px; }
.n-name { font-size: 12.750px; line-height: 16px; white-space: nowrap; }
.n-state { display: flex; gap: 2px; height: 13px; }
.n-state svg { width: 13px; height: 13px; fill: #76b894; }
.n-menu { position: absolute; right: 12px; top: 15.500px; fill: #6199b0; }
.tags { position: absolute; right: 2px; top: 47px; display: flex; gap: 1px; }
.tags span { height: 16px; border: 1px solid #99a6b3; border-radius: 5px; background: #d0d6dd; padding: 0 5.500px; font-size: 9.500px; line-height: 14px; white-space: nowrap; }
```
